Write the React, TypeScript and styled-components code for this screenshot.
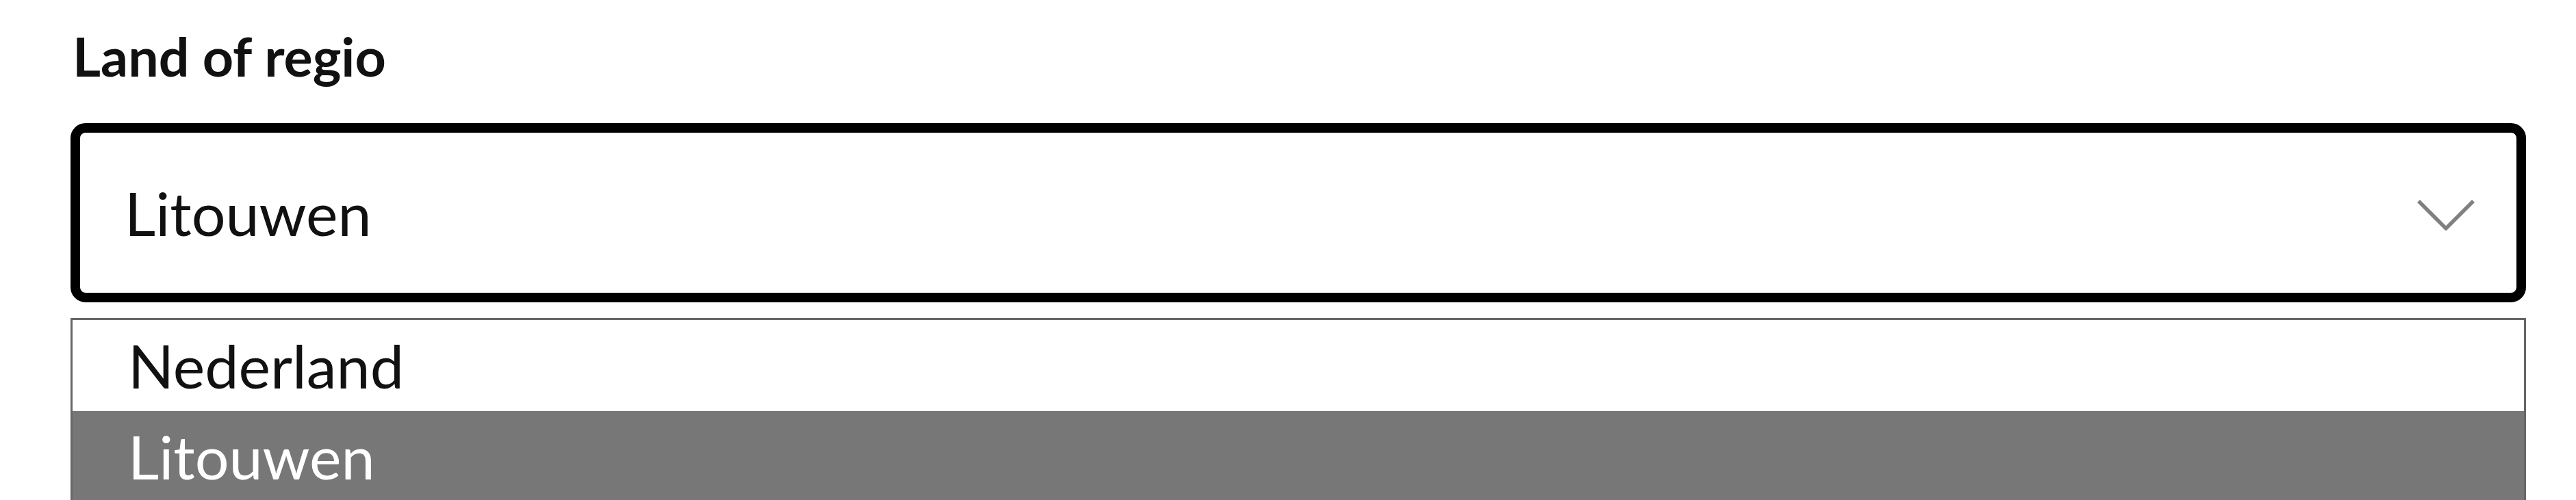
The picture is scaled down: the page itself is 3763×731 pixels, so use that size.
import styled, { createGlobalStyle } from 'styled-components'

const GlobalStyle = createGlobalStyle`
  html, body {
    margin: 0;
    padding: 0;
    background: #fff;
    font-family: Lato, "Liberation Sans", Arial, sans-serif;
    color: #111;
  }
`

const Field = styled.div`
  display: flex;
  flex-direction: column;
  padding: 35px 73px 0 103px;
`

const Label = styled.label`
  font-size: 79px;
  font-weight: 700;
  line-height: 1.2;
  margin-left: 3px;
  color: #111;
`

const SelectBox = styled.div`
  display: flex;
  align-items: center;
  justify-content: space-between;
  box-sizing: border-box;
  height: 262px;
  margin-top: 50px;
  padding: 0 60px 0 65px;
  border: 14px solid #000;
  border-radius: 22px;
  background: #fff;
  font-size: 88px;
  line-height: 1;
`

const Chevron = styled.svg`
  width: 86px;
  height: 46px;
  margin-top: 6px;
  flex-shrink: 0;
`

const ListBox = styled.ul`
  list-style: none;
  margin: 23px 0 0;
  padding: 0;
  border: 3px solid #666;
  background: #fff;
`

const Option = styled.li<{ selected?: boolean }>`
  display: flex;
  align-items: center;
  height: 133px;
  padding-left: 81px;
  font-size: 88px;
  line-height: 1;
  background: ${({ selected }) => (selected ? '#777' : '#fff')};
  color: ${({ selected }) => (selected ? '#fff' : '#111')};
`

const options = ['Nederland', 'Litouwen']

const App = () => {
  const value = 'Litouwen'

  return (
    <>
      <GlobalStyle />
      <Field>
        <Label>Land of regio</Label>
        <SelectBox>
          <span>{value}</span>
          <Chevron viewBox="0 0 86 46">
            <polyline
              points="3,3 43,43 83,3"
              fill="none"
              stroke="#808080"
              strokeWidth="5.5"
            />
          </Chevron>
        </SelectBox>
        <ListBox>
          {options.map((option) => (
            <Option key={option} selected={option === value}>
              {option}
            </Option>
          ))}
        </ListBox>
      </Field>
    </>
  )
}

export default App
